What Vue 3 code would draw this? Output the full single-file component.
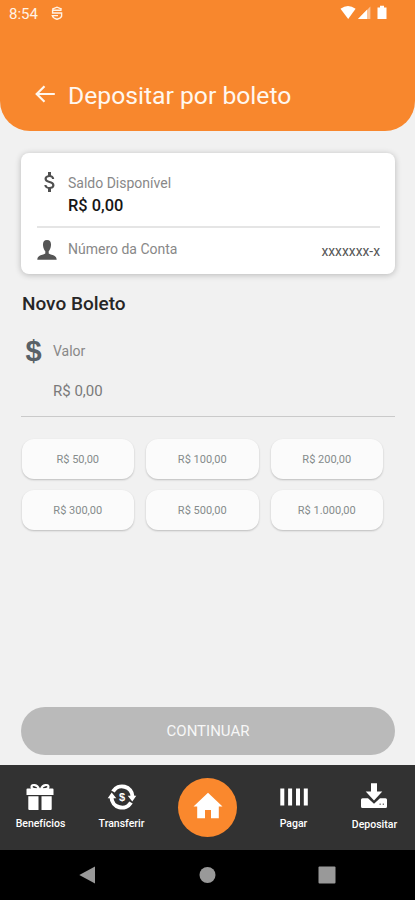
<script setup>
const amounts = ['R$ 50,00', 'R$ 100,00', 'R$ 200,00', 'R$ 300,00', 'R$ 500,00', 'R$ 1.000,00']
</script>

<template>
  <div class="screen">
    <header class="header">
      <div class="status">
        <span class="clock">8:54</span>
        <svg class="app-mark" width="12" height="15" viewBox="0 0 12 15" fill="none" stroke="#fff3e6" stroke-width="1.4">
          <path d="M1.200 3.200 6 1.200 10.800 3.200M10.600 4.300H1.600V7h9v3.200Q10 12.200 6 13.200 2 12.200 1.300 9.600H7" />
        </svg>
        <svg class="signals" width="48" height="16" viewBox="0 0 48 16">
          <path d="M.5 3.800Q8 -1.600 15.600 3.800L8.200 14Z" fill="#fff" />
          <path d="M18 14 30.400 1.400V14Z" fill="#fff" fill-opacity=".5" />
          <path d="M18 14 27 4.800V14Z" fill="#fff" />
          <path d="M37.500 2.400h2.500V.7h4v1.700h2.500V14H37.500Z" fill="#fff" />
        </svg>
      </div>
      <div class="title-row">
        <svg width="22" height="20" viewBox="0 0 22 20" fill="none" stroke="#fff7ef" stroke-width="2.2">
          <path d="M20.800 10H3M10.500 2.200 2.700 10l7.800 7.800" />
        </svg>
        <h1>Depositar por boleto</h1>
      </div>
    </header>

    <main class="content">
      <section class="card">
        <div class="balance">
          <svg class="row-icon" width="24" height="24" viewBox="0 0 24 24" fill="#505050">
            <path d="M11.8 10.9c-2.27-.59-3-1.2-3-2.15 0-1.09 1.01-1.85 2.7-1.85 1.78 0 2.44.85 2.5 2.1h2.21c-.07-1.72-1.12-3.3-3.21-3.81V2h-3v3.16c-1.94.42-3.5 1.68-3.5 3.61 0 2.31 1.91 3.46 4.7 4.13 2.5.6 3 1.48 3 2.41 0 .69-.49 1.79-2.7 1.79-2.06 0-2.87-.92-2.98-2.1h-2.2c.12 2.19 1.76 3.42 3.68 3.83V22h3v-3.15c1.95-.37 3.5-1.5 3.5-3.55 0-2.84-2.43-3.81-4.7-4.4z" />
          </svg>
          <div>
            <div class="label">Saldo Disponível</div>
            <div class="balance-value">R$ 0,00</div>
          </div>
        </div>
        <div class="account">
          <svg width="20" height="22" viewBox="0 0 20 22" fill="#555">
            <path d="M10 1C6.8 1 5.800 3.200 6 6.200 6.200 9 7.200 11 8.300 12.200V14.400C5.500 16.200 .3 16 .3 20.800H19.700C19.700 16 14.500 16.200 11.700 14.400V12.200C12.800 11 13.800 9 14 6.200 14.200 3.200 13.200 1 10 1Z" />
          </svg>
          <span class="label">Número da Conta</span>
          <span class="number">xxxxxxx-x</span>
        </div>
      </section>

      <h2>Novo Boleto</h2>
      <div class="field">
        <div class="field-head">
          <span class="dollar">$</span>
          <span class="label">Valor</span>
        </div>
        <div class="field-value">R$ 0,00</div>
      </div>

      <div class="amounts">
        <button v-for="a in amounts" :key="a">{{ a }}</button>
      </div>

      <button class="continue">CONTINUAR</button>
    </main>

    <nav class="tabs">
      <div class="tab">
        <svg width="30" height="28" viewBox="0 0 30 28">
          <path d="M14 6C12.500 1.500 6.500 .8 6.500 4 6.500 6 10 6.500 14 6.500ZM16 6C17.500 1.500 23.500 .8 23.500 4 23.500 6 20 6.500 16 6.500Z" fill="none" stroke="#fff" stroke-width="2.2" />
          <path d="M2.500 5.500h25q1 0 1 1V12h-27V6.500q0-1 1-1ZM3.300 13.300h10.200V27H4.300q-1 0-1-1ZM16.500 13.300h10.200V26q0 1-1 1h-9.200Z" fill="#fff" />
        </svg>
        <span>Benefícios</span>
      </div>
      <div class="tab">
        <svg width="30" height="28" viewBox="0 0 30 28">
          <g fill="none" stroke="#fff" stroke-width="4">
            <path d="M6 8.500A10.500 10.500 0 0 1 25.500 13.500" />
            <path d="M24 19.500A10.500 10.500 0 0 1 4.500 14.500" />
          </g>
          <path d="M20.700 12.800H29.300L25.300 18.600ZM.7 15.200H9.300L4.700 9.400Z" fill="#fff" />
          <text x="15" y="18" text-anchor="middle" class="coin">$</text>
        </svg>
        <span>Transferir</span>
      </div>
      <div class="home">
        <svg width="32" height="28" viewBox="0 0 32 28">
          <path d="M16 .8 30.500 14.500H26.800V26.300H19V18H13V26.300H5.200V14.500H1.500Z" fill="#fff" />
        </svg>
      </div>
      <div class="tab">
        <svg width="30" height="28" viewBox="0 0 30 28" fill="#fff">
          <path d="M1.300 5.500H5.300V22.500H1.300ZM9.100 5.500H13.100V22.500H9.100ZM17 5.500H21V22.500H17ZM24.800 5.500H28.800V22.500H24.800Z" />
        </svg>
        <span>Pagar</span>
      </div>
      <div class="tab deposit">
        <svg width="30" height="28" viewBox="0 0 30 28">
          <path d="M3.500 15.200H9L15 20.800 21 15.200H26.500Q28 15.200 28 16.700V23.500Q28 25 26.500 25H3.500Q2 25 2 23.500V16.700Q2 15.200 3.500 15.200Z" fill="#fff" />
          <path d="M12 .3H18V8.500H23.300L15 17.500 6.700 8.500H12Z" fill="#fff" />
          <path d="M20.500 21.300h1.300M23.700 21.300H25" stroke="#777" stroke-width="1.500" />
        </svg>
        <span>Depositar</span>
      </div>
    </nav>

    <footer class="system">
      <svg width="18" height="20" viewBox="0 0 18 20"><path d="M1.300 10 17 1.500V18.500Z" fill="#999" /></svg>
      <svg width="18" height="20" viewBox="0 0 18 20"><circle cx="9.500" cy="10" r="8" fill="#999" /></svg>
      <svg width="18" height="20" viewBox="0 0 18 20"><rect x=".5" y="1.500" width="17" height="17" rx="1" fill="#999" /></svg>
    </footer>
  </div>
</template>

<style>
body {
  background: #f1f1f1;
}
</style>

<style scoped>
* {
  box-sizing: border-box;
}
.screen {
  height: 900px;
  display: flex;
  flex-direction: column;
  font-family: Roboto, "Liberation Sans", sans-serif;
  background: #f1f1f1;
}
svg {
  display: block;
  flex: none;
}
h1,
h2 {
  margin: 0;
}
button {
  font-family: inherit;
  border: 0;
  padding: 0;
}
.header {
  height: 131px;
  flex: none;
  background: #f8872d;
  border-radius: 0 0 30px 30px;
}
.status {
  height: 28px;
  padding: 0 27px 2px 9px;
  display: flex;
  align-items: center;
  color: #fff3e6;
}
.clock {
  width: 42px;
  padding-top: 2px;
  font-size: 15px;
  line-height: 26px;
}
.signals {
  margin-left: auto;
}
.title-row {
  margin-top: 46px;
  padding-left: 34px;
  display: flex;
  align-items: center;
  gap: 12px;
  height: 40px;
}
h1 {
  padding-top: 3px;
  font-size: 24.700px;
  font-weight: 400;
  line-height: 40px;
  color: #fff7ef;
}
.content {
  height: 634px;
  padding: 22px 20px 0 21px;
  display: flex;
  flex-direction: column;
}
.card {
  height: 121px;
  padding: 0 15px 0 16px;
  border-radius: 8px;
  background: #fff;
  box-shadow: 0 1px 6px rgba(0, 0, 0, 0.24);
  flex: none;
}
.label {
  font-size: 14px;
  line-height: 20px;
  color: #888;
}
.balance {
  height: 75px;
  padding-top: 20px;
  display: flex;
  gap: 6px;
  border-bottom: 2px solid #e5e5e5;
}
.row-icon {
  margin: -3px 0 0 1px;
}
.balance-value {
  padding-top: 1px;
  font-size: 16.400px;
  font-weight: 500;
  line-height: 24px;
  color: #161616;
}
.account {
  height: 41px;
  display: flex;
  align-items: center;
  gap: 11px;
}
.account svg {
  margin-top: 3px;
}
.number {
  margin: 5px 0 0 auto;
  font-size: 13.800px;
  color: #555;
}
h2 {
  margin: 18px 0 0 1px;
  font-size: 19px;
  font-weight: 500;
  line-height: 24px;
  color: #262626;
}
.field {
  margin-top: 15px;
  height: 86px;
  flex: none;
  border-bottom: 1px solid #cacaca;
}
.field-head {
  height: 40px;
  display: flex;
  align-items: center;
}
.dollar {
  width: 32px;
  padding-left: 4.500px;
  font: 700 29px/40px "Liberation Sans", sans-serif;
  color: #596167;
}
.field-value {
  padding: 10px 0 0 32px;
  font-size: 15px;
  line-height: 20px;
  color: #7a7a7a;
}
.amounts {
  margin: 22px 12px 0 0.500px;
  display: grid;
  grid-template-columns: repeat(3, 112.500px);
  grid-auto-rows: 40px;
  gap: 11px 12px;
}
.amounts button {
  border-radius: 12px;
  background: #fbfbfb;
  box-shadow: 0 1px 2px rgba(0, 0, 0, 0.22);
  font-size: 11px;
  color: #858b8b;
}
.continue {
  margin-top: auto;
  margin-bottom: 10px;
  height: 48px;
  flex: none;
  border-radius: 24px;
  background: #bababa;
  color: #f7f7f7;
  font-size: 15px;
}
.tabs {
  height: 85px;
  flex: none;
  display: grid;
  grid-template-columns: 81px 81px 91px 81px 81px;
  justify-items: center;
  background: #323232;
  color: #fff;
}
.tab {
  padding-top: 18px;
  display: flex;
  flex-direction: column;
  align-items: center;
  font-size: 10.500px;
  line-height: 14px;
  font-weight: 500;
  gap: 6px;
}
.deposit {
  gap: 7px;
}
.coin {
  font: 700 11px "Liberation Sans", sans-serif;
  fill: #fff;
}
.home {
  width: 59px;
  height: 59px;
  margin-top: 13px;
  border-radius: 50%;
  background: #fa882d;
  display: flex;
  align-items: center;
  justify-content: center;
}
.home svg {
  margin-top: -4px;
}
.system {
  height: 50px;
  display: flex;
  align-items: center;
  justify-content: space-between;
  padding: 0 79px 0 78px;
  background: #000;
}
</style>
